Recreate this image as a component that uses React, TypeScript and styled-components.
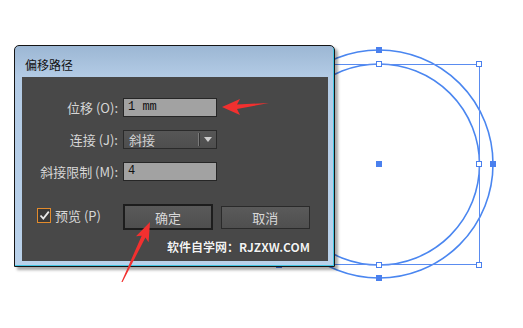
import React from "react";
import styled, { createGlobalStyle } from "styled-components";

const Global = createGlobalStyle`
  html, body { margin: 0; padding: 0; background: #ffffff; }
  body { width: 523px; height: 328px; overflow: hidden; font-family: "Noto Sans CJK SC", "Noto Sans", sans-serif; }
`;

const Stage = styled.div`
  position: relative;
  width: 523px;
  height: 328px;
  background: #ffffff;
  overflow: hidden;
`;

const Canvas = styled.svg`
  position: absolute;
  left: 0;
  top: 0;
`;

const Overlay = styled.svg`
  position: absolute;
  left: 0;
  top: 0;
  pointer-events: none;
`;

const Window = styled.div`
  position: absolute;
  left: 14px;
  top: 45px;
  width: 306px;
  height: 215px;
  border: 1px solid #151515;
  border-radius: 5px 5px 0 0;
  background: linear-gradient(to bottom, #9cb7d4 0px, #b3cbe5 31px, #bad2eb 100%);
  box-shadow: inset -1px -1px 0 #43c6e4, 3px 3px 3px rgba(0, 0, 0, 0.35);
  display: flex;
  flex-direction: column;
  padding: 0 6px 5px 7px;
  box-sizing: content-box;
`;

const TitleBar = styled.div`
  height: 31px;
  display: flex;
  align-items: center;
  padding-left: 3px;
  padding-top: 6px;
  box-sizing: border-box;
  font-size: 12px;
  color: #111111;
  line-height: 1;
`;

const Panel = styled.div`
  width: 306px;
  height: 184px;
  background: #484848;
  box-sizing: border-box;
  padding: 21px 18px 0 15px;
  display: flex;
  flex-direction: column;
`;

const Form = styled.div`
  display: grid;
  grid-template-columns: 81px 94px;
  column-gap: 5px;
  row-gap: 13px;
  grid-auto-rows: 19px;
`;

const Label = styled.div`
  text-align: right;
  white-space: nowrap;
  font-size: 13px;
  line-height: 19px;
  color: #d6d6d6;
`;

const Field = styled.div`
  box-sizing: border-box;
  height: 19px;
  border: 1px solid #262626;
  background: #a2a2a2;
  padding-left: 4px;
  font-family: "Liberation Mono", "DejaVu Sans Mono", monospace;
  font-size: 12px;
  line-height: 17px;
  color: #111111;
`;

const Select = styled.div`
  box-sizing: border-box;
  height: 19px;
  border: 1px solid #2a2a2a;
  background: linear-gradient(to bottom, #565656, #4e4e4e);
  display: flex;
  align-items: stretch;
`;

const SelectText = styled.div`
  flex: 1;
  padding-left: 5px;
  font-size: 13px;
  line-height: 17px;
  color: #d2d2d2;
`;

const SelectDivider = styled.div`
  width: 1px;
  margin: 2px 0;
  background: #7a7a7a;
  box-shadow: 1px 0 0 #333333;
`;

const SelectArrow = styled.div`
  width: 17px;
  display: flex;
  align-items: center;
  justify-content: center;
  &::after {
    content: "";
    width: 0;
    height: 0;
    border-left: 4px solid transparent;
    border-right: 4px solid transparent;
    border-top: 5px solid #cfcfcf;
  }
`;

const BottomRow = styled.div`
  display: flex;
  align-items: center;
  margin-top: 23px;
  height: 26px;
`;

const Preview = styled.div`
  width: 87px;
  display: flex;
  align-items: center;
  gap: 4px;
  margin-top: -3px;
  font-size: 13px;
  color: #d6d6d6;
  white-space: nowrap;
`;

const Check = styled.div`
  box-sizing: border-box;
  width: 14px;
  height: 15px;
  border: 1px solid #e38b2c;
  background: #3a3a3a;
  display: flex;
  align-items: center;
  justify-content: center;
`;

const Button = styled.div<{ $primary?: boolean }>`
  box-sizing: border-box;
  width: 90px;
  height: ${(p) => (p.$primary ? 26 : 23)}px;
  margin-left: ${(p) => (p.$primary ? 0 : 8)}px;
  border: ${(p) => (p.$primary ? "2px solid #1d1d1d" : "1px solid #2a2a2a")};
  background: linear-gradient(to bottom, #5a5a5a, #4f4f4f);
  display: flex;
  align-items: center;
  justify-content: center;
  font-size: 13px;
  color: #d8d8d8;
`;

const Watermark = styled.div`
  margin-top: 8px;
  align-self: flex-end;
  font-size: 12px;
  font-weight: 700;
  line-height: 17px;
  color: #f2f2f2;
  text-shadow: 0 0 1px rgba(0, 0, 0, 0.6);
  white-space: nowrap;
`;

const BLUE = "#4a86f0";

const handlesHollow: [number, number][] = [
  [379, 64],
  [479, 64],
  [479, 164],
  [479, 265],
  [379, 265],
  [279, 64],
  [279, 164],
  [279, 265],
];
const handlesFilled: [number, number][] = [
  [379, 50],
  [493, 164],
  [379, 278],
  [265, 164],
  [379, 164],
];

export default function App() {
  return (
    <Stage>
      <Global />
      <Canvas width={523} height={328} viewBox="0 0 523 328">
        <circle cx={379} cy={164} r={114} fill="none" stroke={BLUE} strokeWidth={1.6} />
        <circle cx={379} cy={164.5} r={100.5} fill="none" stroke={BLUE} strokeWidth={1.6} />
        <rect x={279.5} y={64.5} width={200} height={200} fill="none" stroke="#5a8cf0" strokeWidth={1} />
        {handlesHollow.map(([x, y], i) => (
          <rect key={"h" + i} x={x - 2.5} y={y - 2.5} width={5} height={5} fill="#ffffff" stroke="#4a80ee" strokeWidth={1} />
        ))}
        {handlesFilled.map(([x, y], i) => (
          <rect key={"f" + i} x={x - 3} y={y - 3} width={6} height={6} fill="#4a80ee" />
        ))}
      </Canvas>

      <Window>
        <TitleBar>偏移路径</TitleBar>
        <Panel>
          <Form>
            <Label>位移 (O):</Label>
            <Field>1 mm</Field>
            <Label>连接 (J):</Label>
            <Select>
              <SelectText>斜接</SelectText>
              <SelectDivider />
              <SelectArrow />
            </Select>
            <Label>斜接限制 (M):</Label>
            <Field>4</Field>
          </Form>
          <BottomRow>
            <Preview>
              <Check>
                <svg width="11" height="11" viewBox="0 0 11 11">
                  <path d="M1.5 5.5 L4.3 8.6 L9.8 1.6" fill="none" stroke="#e8e8e8" strokeWidth={1.8} />
                </svg>
              </Check>
              预览 (P)
            </Preview>
            <Button $primary>确定</Button>
            <Button>取消</Button>
          </BottomRow>
          <Watermark>软件自学网：RJZXW.COM</Watermark>
        </Panel>
      </Window>

      <Overlay width={523} height={328} viewBox="0 0 523 328">
        <polygon
          points="222,107 240,99 237,104.5 269,103 237,109 240,115"
          fill="#f2302f"
        />
        <polygon
          points="150,222 148.6,242.3 145.4,237.5 122.6,282 121.4,282 141.7,235.7 136,236.3"
          fill="#f2302f"
        />
      </Overlay>
    </Stage>
  );
}
